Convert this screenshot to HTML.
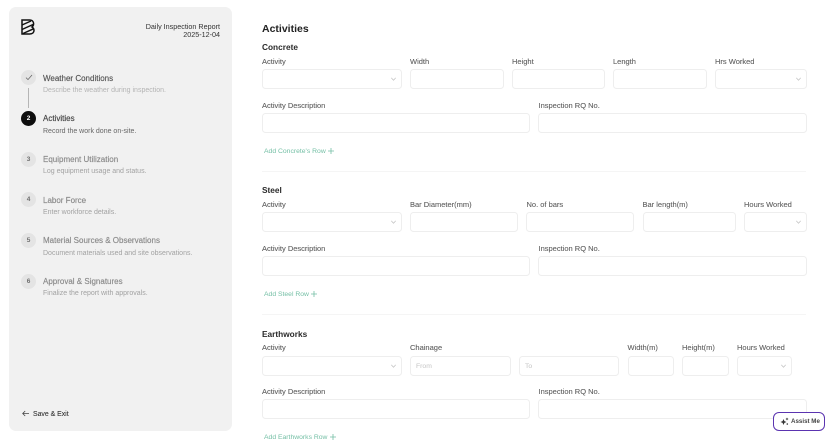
<!DOCTYPE html>
<html><head><meta charset="utf-8">
<style>
html,body{margin:0;padding:0;background:#fff}
body{width:828px;height:439px;overflow:hidden;position:relative;font-family:"Liberation Sans",sans-serif}
.a{position:absolute;white-space:nowrap}
.panel{position:absolute;left:9px;top:7px;width:223px;height:424px;background:#f1f1f1;border-radius:7px}
.c{position:absolute;left:21px;width:15px;height:15px;border-radius:50%;background:#e4e4e4;color:#6f6f6f;font-size:6.5px;font-weight:bold;text-align:center;line-height:15px}
.st{position:absolute;left:43px;font-size:8px;line-height:11px;color:#8a8a8a;white-space:nowrap;-webkit-text-stroke:.15px currentColor}
.sd{position:absolute;left:43px;font-size:7px;line-height:10px;color:#a2a2a2;white-space:nowrap}
.l{position:absolute;font-size:7.5px;line-height:10px;color:#5f5f5f;white-space:nowrap;-webkit-text-stroke:.1px currentColor}
.i{position:absolute;box-sizing:border-box;height:20px;border:1px solid #eeeeee;border-radius:3.5px;background:#fff;font-size:6.8px;color:#c4c4c4;line-height:19px;padding-left:5px}
.h{position:absolute;left:262px;font-size:8.3px;line-height:11px;font-weight:bold;color:#2a2a2a}
.add{position:absolute;left:264px;font-size:6.8px;line-height:10px;color:#74bfa5;white-space:nowrap}
.hr{position:absolute;left:262px;width:544px;height:1px;background:#f5f5f5}
svg{position:absolute;overflow:visible}
</style></head><body>
<div class="panel"></div>
<svg style="left:21px;top:19px" width="14" height="16" viewBox="0 0 14 16"><path d="M1 1H8.500C11.500 1 12.600 3 12.600 4.600C12.600 6 12 7.200 11 8C12.200 8.800 13 10 13 11.400C13 13.400 11.500 15 8.800 15H1Z" fill="none" stroke="#111" stroke-width="1.500"/><path d="M1 6L10 2M1 10.500L12 5.500M2 14.500L12.500 9.800" stroke="#111" stroke-width="1.400" fill="none"/></svg>
<div class="a" style="right:608px;top:23px;font-size:7.200px;line-height:8px;color:#333;text-align:right">Daily Inspection Report<br>2025-12-04</div>

<div class="c" style="top:70px"></div>
<svg style="left:25px;top:74px" width="8" height="7" viewBox="0 0 8 7"><path d="M1 3.600L3 5.600L7 1" fill="none" stroke="#666" stroke-width=".8"/></svg>
<div class="a" style="left:27.500px;top:88px;width:1.200px;height:20px;background:#b5b5b5"></div>
<div class="st" style="top:72.500px;color:#555">Weather Conditions</div>
<div class="sd" style="top:86px;color:#b4b4b4">Describe the weather during inspection.</div>

<div class="c" style="top:111px;background:#0d0d0d;color:#fff">2</div>
<div class="st" style="top:113px;color:#444">Activities</div>
<div class="sd" style="top:127px;color:#666">Record the work done on-site.</div>

<div class="c" style="top:151.500px">3</div>
<div class="st" style="top:153.500px">Equipment Utilization</div>
<div class="sd" style="top:167px">Log equipment usage and status.</div>

<div class="c" style="top:192px">4</div>
<div class="st" style="top:194.500px">Labor Force</div>
<div class="sd" style="top:208px">Enter workforce details.</div>

<div class="c" style="top:233px">5</div>
<div class="st" style="top:235px">Material Sources &amp; Observations</div>
<div class="sd" style="top:249px">Document materials used and site observations.</div>

<div class="c" style="top:274px">6</div>
<div class="st" style="top:276px">Approval &amp; Signatures</div>
<div class="sd" style="top:289px">Finalize the report with approvals.</div>

<svg style="left:22px;top:410px" width="7" height="7" viewBox="0 0 7 7"><path d="M7 3.500H.7M3.200 1L.7 3.500L3.200 6" fill="none" stroke="#444" stroke-width=".8"/></svg>
<div class="a" style="left:33px;top:410px;font-size:6.900px;line-height:10px;color:#333;-webkit-text-stroke:.1px #333">Save &amp; Exit</div>

<div class="a" style="left:262px;top:22px;font-size:10.500px;line-height:14px;font-weight:bold;color:#222">Activities</div>

<!-- Concrete -->
<div class="h" style="top:42px">Concrete</div>
<div class="l" style="left:262px;top:56.500px">Activity</div>
<div class="l" style="left:410px;top:56.500px">Width</div>
<div class="l" style="left:512px;top:56.500px">Height</div>
<div class="l" style="left:613px;top:56.500px">Length</div>
<div class="l" style="left:715px;top:56.500px">Hrs Worked</div>
<div class="i" style="left:262px;top:69px;width:140px"></div>
<svg style="left:391px;top:77px" width="5" height="4" viewBox="0 0 5 4"><path d="M.3.800L2.500 3.200L4.700.800" fill="none" stroke="#bbb" stroke-width=".7"/></svg>
<div class="i" style="left:410px;top:69px;width:94px"></div>
<div class="i" style="left:512px;top:69px;width:93px"></div>
<div class="i" style="left:613px;top:69px;width:94px"></div>
<div class="i" style="left:715px;top:69px;width:92px"></div>
<svg style="left:796px;top:77px" width="5" height="4" viewBox="0 0 5 4"><path d="M.3.800L2.500 3.200L4.700.800" fill="none" stroke="#bbb" stroke-width=".7"/></svg>
<div class="l" style="left:262px;top:100.500px">Activity Description</div>
<div class="l" style="left:538.500px;top:100.500px">Inspection RQ No.</div>
<div class="i" style="left:262px;top:113px;width:268px"></div>
<div class="i" style="left:538px;top:113px;width:268.500px"></div>
<div class="add" style="top:147px">Add Concrete's Row</div>
<svg style="left:328px;top:147.500px" width="6" height="6" viewBox="0 0 6 6"><path d="M3 0V6M0 3H6" stroke="#74bfa5" stroke-width=".8"/></svg>
<div class="hr" style="top:171px"></div>

<!-- Steel -->
<div class="h" style="top:185px">Steel</div>
<div class="l" style="left:262px;top:199.500px">Activity</div>
<div class="l" style="left:410px;top:199.500px">Bar Diameter(mm)</div>
<div class="l" style="left:526.500px;top:199.500px">No. of bars</div>
<div class="l" style="left:642.500px;top:199.500px">Bar length(m)</div>
<div class="l" style="left:744px;top:199.500px">Hours Worked</div>
<div class="i" style="left:262px;top:212px;width:140px"></div>
<svg style="left:391px;top:220px" width="5" height="4" viewBox="0 0 5 4"><path d="M.3.800L2.500 3.200L4.700.800" fill="none" stroke="#bbb" stroke-width=".7"/></svg>
<div class="i" style="left:410px;top:212px;width:108px"></div>
<div class="i" style="left:526px;top:212px;width:108px"></div>
<div class="i" style="left:642.500px;top:212px;width:93.500px"></div>
<div class="i" style="left:744px;top:212px;width:63px"></div>
<svg style="left:796px;top:220px" width="5" height="4" viewBox="0 0 5 4"><path d="M.3.800L2.500 3.200L4.700.800" fill="none" stroke="#bbb" stroke-width=".7"/></svg>
<div class="l" style="left:262px;top:243.500px">Activity Description</div>
<div class="l" style="left:538.500px;top:243.500px">Inspection RQ No.</div>
<div class="i" style="left:262px;top:256px;width:268px"></div>
<div class="i" style="left:538px;top:256px;width:268.500px"></div>
<div class="add" style="top:290px">Add Steel Row</div>
<svg style="left:311px;top:290.500px" width="6" height="6" viewBox="0 0 6 6"><path d="M3 0V6M0 3H6" stroke="#74bfa5" stroke-width=".8"/></svg>
<div class="hr" style="top:314px"></div>

<!-- Earthworks -->
<div class="h" style="top:328.500px">Earthworks</div>
<div class="l" style="left:262px;top:342.500px">Activity</div>
<div class="l" style="left:410px;top:342.500px">Chainage</div>
<div class="l" style="left:627.500px;top:342.500px">Width(m)</div>
<div class="l" style="left:682px;top:342.500px">Height(m)</div>
<div class="l" style="left:737px;top:342.500px">Hours Worked</div>
<div class="i" style="left:262px;top:355.500px;width:140px"></div>
<svg style="left:391px;top:363.500px" width="5" height="4" viewBox="0 0 5 4"><path d="M.3.800L2.500 3.200L4.700.800" fill="none" stroke="#bbb" stroke-width=".7"/></svg>
<div class="i" style="left:410px;top:355.500px;width:100.500px">From</div>
<div class="i" style="left:519px;top:355.500px;width:100px">To</div>
<div class="i" style="left:627.500px;top:355.500px;width:46.500px"></div>
<div class="i" style="left:682px;top:355.500px;width:47px"></div>
<div class="i" style="left:737px;top:355.500px;width:54.500px"></div>
<svg style="left:781px;top:363.500px" width="5" height="4" viewBox="0 0 5 4"><path d="M.3.800L2.500 3.200L4.700.800" fill="none" stroke="#bbb" stroke-width=".7"/></svg>
<div class="l" style="left:262px;top:386.500px">Activity Description</div>
<div class="l" style="left:538.500px;top:386.500px">Inspection RQ No.</div>
<div class="i" style="left:262px;top:399px;width:268px"></div>
<div class="i" style="left:538px;top:399px;width:268.500px"></div>
<div class="add" style="top:433px">Add Earthworks Row</div>
<svg style="left:330px;top:433.500px" width="6" height="6" viewBox="0 0 6 6"><path d="M3 0V6M0 3H6" stroke="#74bfa5" stroke-width=".8"/></svg>

<!-- Assist -->
<div class="a" style="left:773px;top:412px;width:52px;height:19px;box-sizing:border-box;border:1.500px solid #5b34b0;border-radius:6px;background:#fff"></div>
<svg style="left:780px;top:417px" width="9" height="9" viewBox="0 0 9 9"><path d="M3.500 2L4.400 4.100L6.500 5L4.400 5.900L3.500 8L2.600 5.900L.5 5L2.600 4.100Z" fill="#333"/><path d="M7 .5L7.500 1.500L8.500 2L7.500 2.500L7 3.500L6.500 2.500L5.500 2L6.500 1.500Z" fill="#333"/><circle cx="7.300" cy="7" r=".8" fill="#333"/></svg>
<div class="a" style="left:791px;top:417px;font-size:6.200px;line-height:10px;font-weight:bold;color:#444">Assist Me</div>
</body></html>
